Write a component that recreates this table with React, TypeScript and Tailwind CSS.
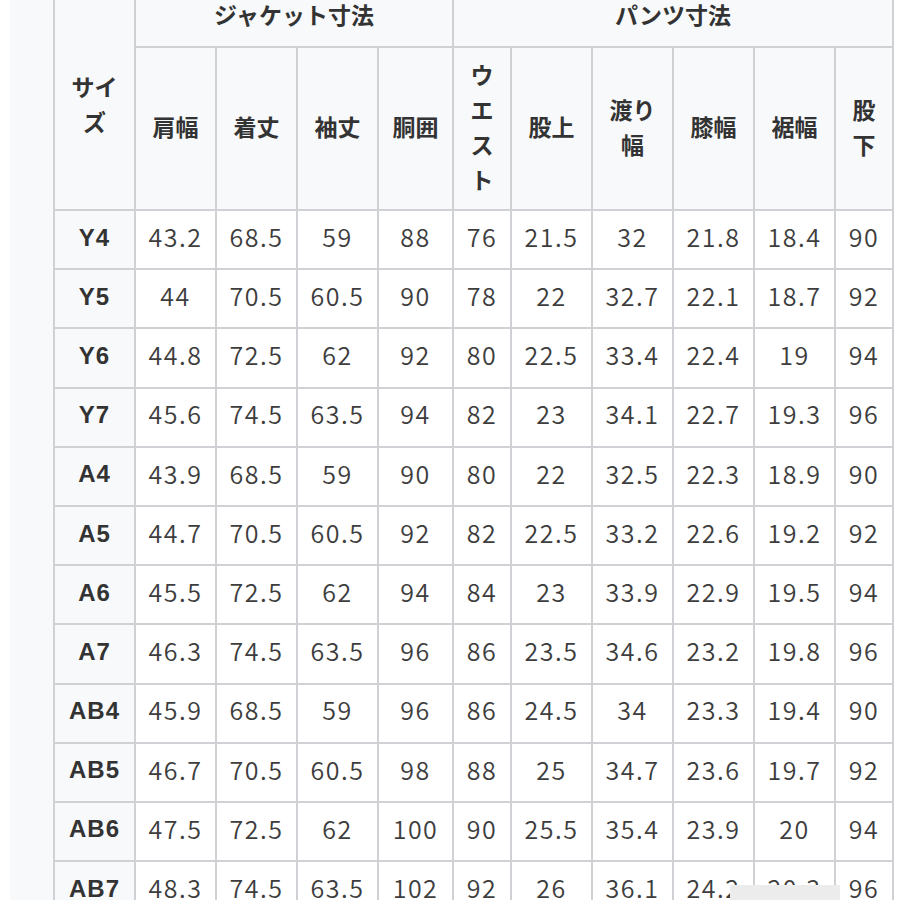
const rows: [string, string[]][] = [
  ['Y4', ['43.2', '68.5', '59', '88', '76', '21.5', '32', '21.8', '18.4', '90']],
  ['Y5', ['44', '70.5', '60.5', '90', '78', '22', '32.7', '22.1', '18.7', '92']],
  ['Y6', ['44.8', '72.5', '62', '92', '80', '22.5', '33.4', '22.4', '19', '94']],
  ['Y7', ['45.6', '74.5', '63.5', '94', '82', '23', '34.1', '22.7', '19.3', '96']],
  ['A4', ['43.9', '68.5', '59', '90', '80', '22', '32.5', '22.3', '18.9', '90']],
  ['A5', ['44.7', '70.5', '60.5', '92', '82', '22.5', '33.2', '22.6', '19.2', '92']],
  ['A6', ['45.5', '72.5', '62', '94', '84', '23', '33.9', '22.9', '19.5', '94']],
  ['A7', ['46.3', '74.5', '63.5', '96', '86', '23.5', '34.6', '23.2', '19.8', '96']],
  ['AB4', ['45.9', '68.5', '59', '96', '86', '24.5', '34', '23.3', '19.4', '90']],
  ['AB5', ['46.7', '70.5', '60.5', '98', '88', '25', '34.7', '23.6', '19.7', '92']],
  ['AB6', ['47.5', '72.5', '62', '100', '90', '25.5', '35.4', '23.9', '20', '94']],
  ['AB7', ['48.3', '74.5', '63.5', '102', '92', '26', '36.1', '24.2', '20.3', '96']],
];

const subHeads = ['肩幅', '着丈', '袖丈', '胴囲', 'ウエスト', '股上', '渡り幅', '膝幅', '裾幅', '股下'];

const th = 'border-2 border-[#cfd1d4] bg-[#f8f9fa] px-2 text-center align-middle font-bold text-[#333] text-[23px] leading-[35px]';
const td = 'border-2 border-[#cfd1d4] bg-white px-1 pb-[6px] text-center align-middle font-[350] text-[#3d3d3d] text-[25px] tracking-[1.5px]';

export default function App() {
  return (
    <div
      className="relative flex h-[900px] overflow-hidden bg-white"
      style={{ fontFamily: '"Noto Sans CJK JP", "Noto Sans", sans-serif' }}
    >
      <div className="w-[10px] shrink-0 bg-white" />
      <div className="w-[43px] shrink-0 bg-[#f8f9fa]" />
      <div className="-mt-[14px] shrink-0">
        <table className="w-[841px] table-fixed border-collapse">
          <colgroup>
            <col className="w-[81px]" />
            <col className="w-[81px]" />
            <col className="w-[81px]" />
            <col className="w-[81px]" />
            <col className="w-[75px]" />
            <col className="w-[58px]" />
            <col className="w-[81px]" />
            <col className="w-[81px]" />
            <col className="w-[81px]" />
            <col className="w-[81px]" />
            <col className="w-[58px]" />
          </colgroup>
          <thead>
            <tr className="h-[60px]">
              <th rowSpan={2} className={`${th} pt-[10px]`}>サイズ</th>
              <th colSpan={4} className={`${th} pb-[6px]`}>ジャケット寸法</th>
              <th colSpan={6} className={`${th} pb-[6px]`}>パンツ寸法</th>
            </tr>
            <tr className="h-[163px]">
              {subHeads.map((h) => (
                <th key={h} className={`${th} pb-[4px]`}>{h}</th>
              ))}
            </tr>
          </thead>
          <tbody>
            {rows.map(([size, vals]) => (
              <tr key={size} className="h-[59.2px]">
                <th
                  className="border-2 border-[#cfd1d4] bg-[#f8f9fa] pb-[4px] text-center align-middle text-[24px] font-bold tracking-[1px] text-[#333]"
                  style={{ fontFamily: '"Liberation Sans", Arial, sans-serif' }}
                >
                  {size}
                </th>
                {vals.map((v, i) => (
                  <td key={i} className={td}>{v}</td>
                ))}
              </tr>
            ))}
          </tbody>
        </table>
      </div>
      <div className="absolute left-[730px] top-[885px] h-[20px] w-[110px] bg-[#ececec]" />
    </div>
  );
}
